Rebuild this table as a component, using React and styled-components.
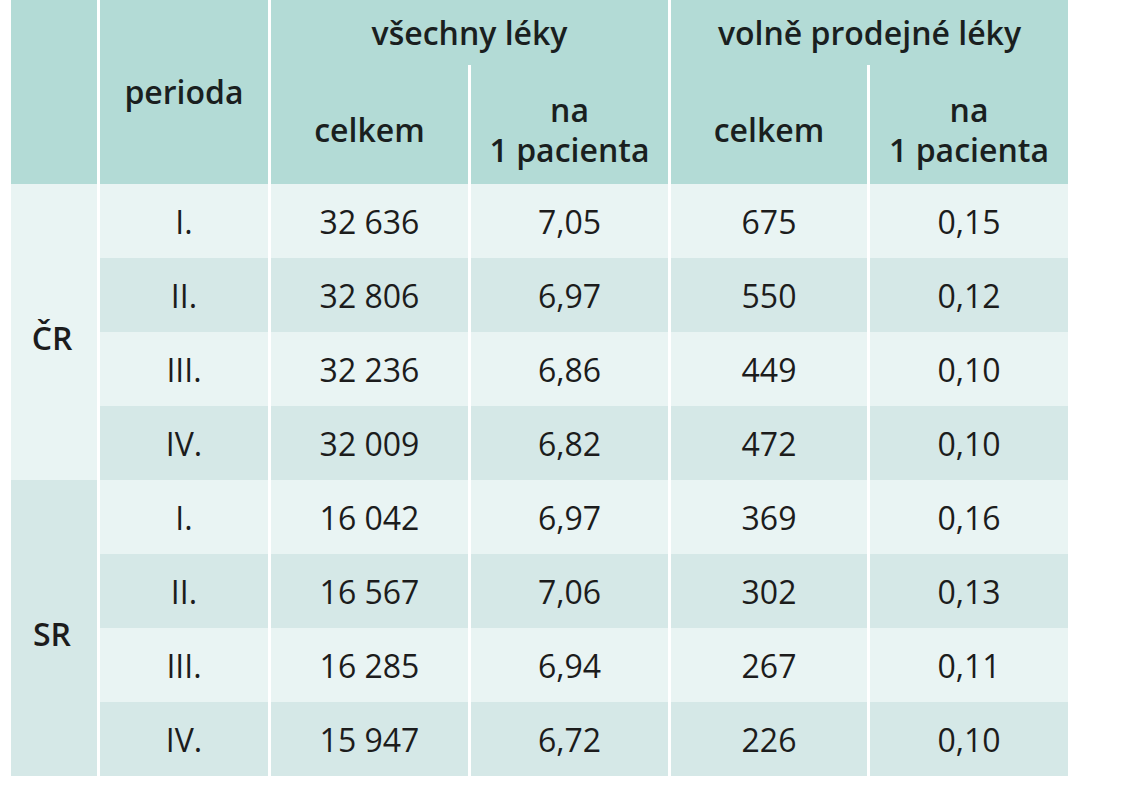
import React from "react";
import styled, { createGlobalStyle } from "styled-components";

const Global = createGlobalStyle`
  html, body { margin: 0; padding: 0; background: #ffffff; }
  body { font-family: "Open Sans", "Noto Sans", sans-serif; color: #1c1c1c; }
`;

const Page = styled.div`
  width: 1128px;
  height: 800px;
  padding-left: 11px;
  box-sizing: border-box;
`;

const Grid = styled.div`
  display: grid;
  grid-template-columns: 86px 168px 197px 197px 196px 198px;
  grid-template-rows: 65px 119px repeat(8, 74px);
  column-gap: 3px;
  width: 1057px;
`;

const Head = styled.div`
  background: #b3dbd6;
  display: flex;
  align-items: center;
  justify-content: center;
  text-align: center;
  font-weight: 600;
  font-size: 32px;
  line-height: 40px;
  color: #1a1f1f;
  grid-column: ${(p) => p.col || "auto"};
  grid-row: ${(p) => p.row || "auto"};
  padding-top: ${(p) => p.pt || 0}px;
  box-sizing: border-box;
`;

const Cell = styled.div`
  background: ${(p) => (p.dark ? "#d5e8e7" : "#e9f4f3")};
  display: flex;
  align-items: center;
  justify-content: center;
  font-size: 32px;
  font-weight: 400;
  color: #1c1c1c;
  grid-column: ${(p) => p.col || "auto"};
  grid-row: ${(p) => p.row || "auto"};
`;

const Group = styled(Cell)`
  font-weight: 600;
  padding-top: 10px;
  padding-right: 4px;
  box-sizing: border-box;
`;

const rows = [
  ["I.", "32 636", "7,05", "675", "0,15"],
  ["II.", "32 806", "6,97", "550", "0,12"],
  ["III.", "32 236", "6,86", "449", "0,10"],
  ["IV.", "32 009", "6,82", "472", "0,10"],
  ["I.", "16 042", "6,97", "369", "0,16"],
  ["II.", "16 567", "7,06", "302", "0,13"],
  ["III.", "16 285", "6,94", "267", "0,11"],
  ["IV.", "15 947", "6,72", "226", "0,10"],
];

export default function App() {
  return (
    <Page>
      <Global />
      <Grid>
        <Head col="1" row="1 / span 2" />
        <Head col="2" row="1 / span 2">perioda</Head>
        <Head col="3 / span 2" row="1">všechny léky</Head>
        <Head col="5 / span 2" row="1">volně prodejné léky</Head>
        <Head col="3" row="2" pt={10}>celkem</Head>
        <Head col="4" row="2" pt={10}>na<br />1 pacienta</Head>
        <Head col="5" row="2" pt={10}>celkem</Head>
        <Head col="6" row="2" pt={10}>na<br />1 pacienta</Head>
        <Group col="1" row="3 / span 4">ČR</Group>
        <Group col="1" row="7 / span 4" dark>SR</Group>
        {rows.map((r, i) =>
          r.map((v, j) => (
            <Cell key={`${i}-${j}`} col={`${j + 2}`} row={`${i + 3}`} dark={i % 2 === 1}>
              {v}
            </Cell>
          ))
        )}
      </Grid>
    </Page>
  );
}
